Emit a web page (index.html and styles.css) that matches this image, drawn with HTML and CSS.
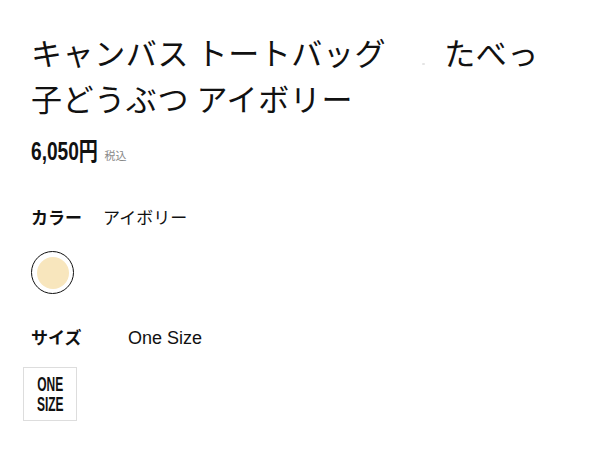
FILE: index.html
```html
<!DOCTYPE html>
<html lang="ja">
<head>
    <meta charset="UTF-8">
    <title>キャンバス トートバッグ</title>
    <link rel="stylesheet" href="styles.css">
</head>
<body>
<div class="product">
    <h1 class="title">キャンバス トートバッグ<span class="sep"></span>たべっ子どうぶつ アイボリー</h1>
    <p class="price"><span class="amount">6,050円</span><span class="tax">税込</span></p>

    <div class="option">
        <div class="option-head">
            <span class="option-name">カラー</span>
            <span class="option-value">アイボリー</span>
        </div>
        <div class="swatches">
            <span class="swatch selected"><span class="chip"></span></span>
        </div>
    </div>

    <div class="option option-size">
        <div class="option-head">
            <span class="option-name size-name">サイズ</span>
            <span class="option-value size-value">One Size</span>
        </div>
        <div class="sizes">
            <span class="size-box"><span class="size-label">ONE<br>SIZE</span></span>
        </div>
    </div>
</div>
</body>
</html>
```

FILE: styles.css
```css
body {
    margin: 0;
    background: #fff;
    color: #111;
    font-family: "Liberation Sans", "Noto Sans CJK JP", sans-serif;
}

.product {
    padding: 29px 23px 0 31px;
}

.title {
    margin: 0;
    width: 520px;
    font-family: "Noto Sans CJK JP", sans-serif;
    font-size: 31px;
    font-weight: normal;
    line-height: 46px;
    letter-spacing: 0.6px;
}

/* 区切りの点はほぼ見えない */
.sep {
    display: inline-block;
    width: 58px;
    height: 2px;
    background: radial-gradient(circle, #e4e4e4 1px, transparent 1.5px) no-repeat 36px 0 / 3px 2px;
}

.price {
    margin: 16px 0 0;
    line-height: 28px;
    height: 28px;
}

.amount {
    display: inline-block;
    font-family: "Liberation Sans", "Noto Sans CJK JP", sans-serif;
    font-size: 25px;
    font-weight: bold;
    transform: scaleX(0.765);
    transform-origin: left center;
}

.tax {
    margin-left: -14px;
    font-family: "Noto Sans CJK JP", sans-serif;
    font-size: 11px;
    color: #888;
}

.option {
    margin-top: 41px;
}

.option-size {
    margin-top: 32px;
}

.option-head {
    display: flex;
    align-items: baseline;
    font-size: 17px;
    line-height: 22px;
}

.option-name {
    width: 72px;
    font-weight: bold;
    font-family: "Noto Sans CJK JP", sans-serif;
}

.option-value {
    font-family: "Noto Sans CJK JP", sans-serif;
    font-size: 17px;
}

.size-name {
    width: 97px;
}

.size-value {
    font-family: "Liberation Sans", sans-serif;
    font-size: 18px;
}

.swatches {
    margin-top: 23px;
}

.swatch {
    display: flex;
    align-items: center;
    justify-content: center;
    width: 41px;
    height: 41px;
    border: 1.5px solid #111;
    border-radius: 50%;
}

.chip {
    width: 32px;
    height: 32px;
    border-radius: 50%;
    background: #f8e6bd;
}

.sizes {
    margin: 18px 0 0 -8px;
}

.size-box {
    display: flex;
    align-items: center;
    justify-content: center;
    width: 52px;
    height: 52px;
    border: 1px solid #ddd;
}

.size-label {
    display: block;
    text-align: center;
    font-family: "Liberation Sans", sans-serif;
    font-size: 20px;
    font-weight: bold;
    line-height: 20px;
    transform: scaleX(0.6);
    color: #111;
}
```
